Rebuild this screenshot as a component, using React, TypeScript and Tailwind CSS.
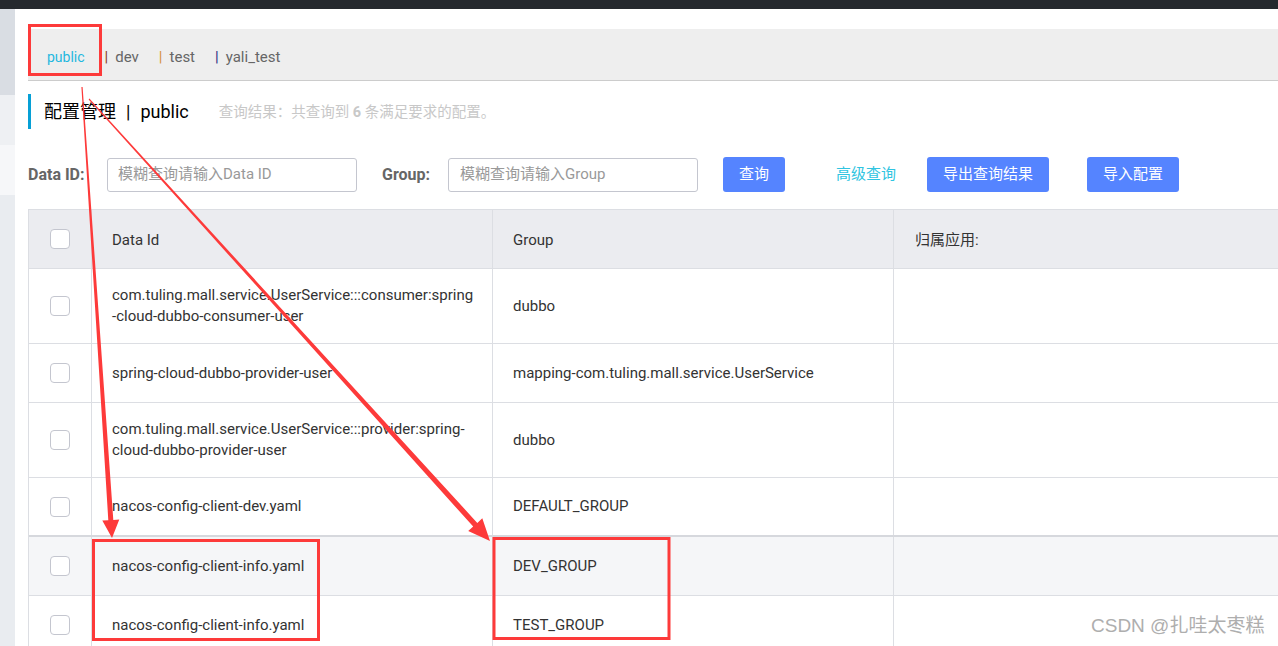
import React from "react";

const font = { fontFamily: 'Roboto, "Noto Sans CJK SC", sans-serif' };

function arrow(x1: number, y1: number, x2: number, y2: number, w0: number, w1: number, hl: number, hw: number) {
  const dx = x2 - x1, dy = y2 - y1;
  const len = Math.hypot(dx, dy);
  const ux = dx / len, uy = dy / len;
  const nx = -uy, ny = ux;
  const bx = x2 - ux * hl, by = y2 - uy * hl;
  const p = (x: number, y: number) => `${x.toFixed(1)},${y.toFixed(1)}`;
  return [
    p(x1 + nx * w0 / 2, y1 + ny * w0 / 2),
    p(bx + nx * w1 / 2, by + ny * w1 / 2),
    p(bx + nx * hw, by + ny * hw),
    p(x2, y2),
    p(bx - nx * hw, by - ny * hw),
    p(bx - nx * w1 / 2, by - ny * w1 / 2),
    p(x1 - nx * w0 / 2, y1 - ny * w0 / 2),
  ].join(" ");
}

function Checkbox() {
  return <div className="w-[20px] h-[20px] rounded-[4px] border border-[#c4c6cf] bg-white" />;
}

const rows: { id: string[]; group: string; hover?: boolean; thick?: boolean }[] = [
  { id: ["com.tuling.mall.service.UserService:::consumer:spring", "-cloud-dubbo-consumer-user"], group: "dubbo" },
  { id: ["spring-cloud-dubbo-provider-user"], group: "mapping-com.tuling.mall.service.UserService" },
  { id: ["com.tuling.mall.service.UserService:::provider:spring-", "cloud-dubbo-provider-user"], group: "dubbo" },
  { id: ["nacos-config-client-dev.yaml"], group: "DEFAULT_GROUP", thick: true },
  { id: ["nacos-config-client-info.yaml"], group: "DEV_GROUP", hover: true },
  { id: ["nacos-config-client-info.yaml"], group: "TEST_GROUP" },
];

export default function App() {
  return (
    <div className="relative w-[1278px] h-[646px] overflow-hidden bg-white text-[#333]" style={font}>
      <div className="h-[9px] bg-[#25292e]" />
      <div className="flex">
        <div className="w-[15px] shrink-0 flex flex-col">
          <div className="h-[86px] bg-[#d9dde3]" />
          <div className="h-[50px] bg-[#eef0f3]" />
          <div className="h-[50px] bg-[#f6f7f9]" />
          <div className="h-[460px] bg-[#e9ecf0]" />
        </div>
        <div className="flex-1 pl-[13px] pt-[20px] min-w-0">
          {/* tabs */}
          <div className="h-[52px] bg-[#eeeeee] border-b border-[#cccccc] flex items-center pl-[19px] pt-[5px] gap-[20px] text-[14px] whitespace-nowrap">
            <span className="text-[#1fb8df]">public</span>
            <span className="text-[#666] text-[15px]"><span className="text-[#8b3a1a]">|</span><span className="ml-[7px]">dev</span></span>
            <span className="text-[#666] text-[15px]"><span className="text-[#d4903c]">|</span><span className="ml-[7px]">test</span></span>
            <span className="text-[#666] text-[15px]"><span className="text-[#1f2a80]">|</span><span className="ml-[7px]">yali_test</span></span>
          </div>
          {/* title */}
          <div className="mt-[13px] h-[35px] border-l-[3px] border-[#06a0d6] flex items-center pl-[13px] whitespace-nowrap">
            <span className="text-[18px] text-black">配置管理</span>
            <span className="text-[18px] text-black mx-[10px]">|</span>
            <span className="text-[18px] text-black">public</span>
            <span className="ml-[30px] text-[14.5px] text-[#c8c8c8] pt-[2px]">查询结果：共查询到 <b className="font-bold">6</b> 条满足要求的配置。</span>
          </div>
          {/* form */}
          <div className="mt-[28px] h-[35px] flex items-center whitespace-nowrap text-[15px]">
            <span className="w-[79px] font-bold text-[#666] text-[16px]">Data ID:</span>
            <div className="w-[250px] h-[34px] border border-[#c4c6cf] rounded-[3px] flex items-center pl-[10px] text-[#999]">模糊查询请输入Data ID</div>
            <span className="ml-[25px] w-[66px] font-bold text-[#666] text-[16px]">Group:</span>
            <div className="w-[250px] h-[34px] border border-[#c4c6cf] rounded-[3px] flex items-center pl-[11px] text-[#999]">模糊查询请输入Group</div>
            <div className="ml-[25px] w-[62px] h-[35px] rounded-[3px] bg-[#5584ff] text-white flex items-center justify-center">查询</div>
            <span className="ml-[51px] text-[#2fc4e1]">高级查询</span>
            <div className="ml-[31px] w-[122px] h-[35px] rounded-[3px] bg-[#5584ff] text-white flex items-center justify-center">导出查询结果</div>
            <div className="ml-[38px] w-[92px] h-[35px] rounded-[3px] bg-[#5584ff] text-white flex items-center justify-center">导入配置</div>
          </div>
          {/* table */}
          <div className="mt-[17px] w-[1400px] border-l border-t border-[#dcdee3] text-[15px]">
            <div className="grid grid-cols-[63px_401px_401px_535px] h-[59px] bg-[#ebecf0] border-b border-[#dcdee3]">
              <div className="flex items-center justify-center border-r border-[#dcdee3]"><Checkbox /></div>
              <div className="flex items-center pl-[20px] pt-[2px] border-r border-[#dcdee3]">Data Id</div>
              <div className="flex items-center pl-[20px] pt-[2px] border-r border-[#dcdee3]">Group</div>
              <div className="flex items-center pl-[21px] pt-[2px]">归属应用:</div>
            </div>
            {rows.map((r, i) => (
              <div
                key={i}
                className={`grid grid-cols-[63px_401px_401px_535px] min-h-[59px] border-[#dcdee3] ${r.thick ? "border-b-2 border-b-[#d6d8dd]" : "border-b"} ${r.hover ? "bg-[#f5f6f8]" : "bg-white"}`}
              >
                <div className="flex items-center justify-center border-r border-[#dcdee3]"><Checkbox /></div>
                <div className="flex flex-col justify-center pl-[20px] py-[16px] leading-[21px] border-r border-[#dcdee3]">
                  {r.id.map((t, j) => <span key={j}>{t}</span>)}
                </div>
                <div className="flex items-center pl-[20px] border-r border-[#dcdee3]">{r.group}</div>
                <div />
              </div>
            ))}
          </div>
        </div>
      </div>

      {/* annotations */}
      <svg className="absolute inset-0 pointer-events-none" width="1278" height="646" viewBox="0 0 1278 646">
        <rect x="29.5" y="25.5" width="71" height="49" fill="none" stroke="#fd3a3a" strokeWidth="3" />
        <polygon points={arrow(82, 87, 112, 538, 1.2, 5, 18, 8.5)} fill="#fd3a3a" />
        <polygon points={arrow(89, 99, 490, 541, 1.2, 5.5, 22, 9.5)} fill="#fd3a3a" />
        <rect x="93.5" y="540.5" width="225" height="99" fill="none" stroke="#fd3a3a" strokeWidth="3" />
        <rect x="494" y="538.5" width="175" height="100" fill="none" stroke="#fd3a3a" strokeWidth="3" />
      </svg>

      <div
        className="absolute left-[1091px] top-[612px] text-[19px] text-[#aeaeae] whitespace-nowrap"
        style={{ fontFamily: '"Liberation Sans", "Noto Sans CJK SC", sans-serif', textShadow: "0 0 1px #fff" }}
      >
        CSDN @扎哇太枣糕
      </div>
    </div>
  );
}
